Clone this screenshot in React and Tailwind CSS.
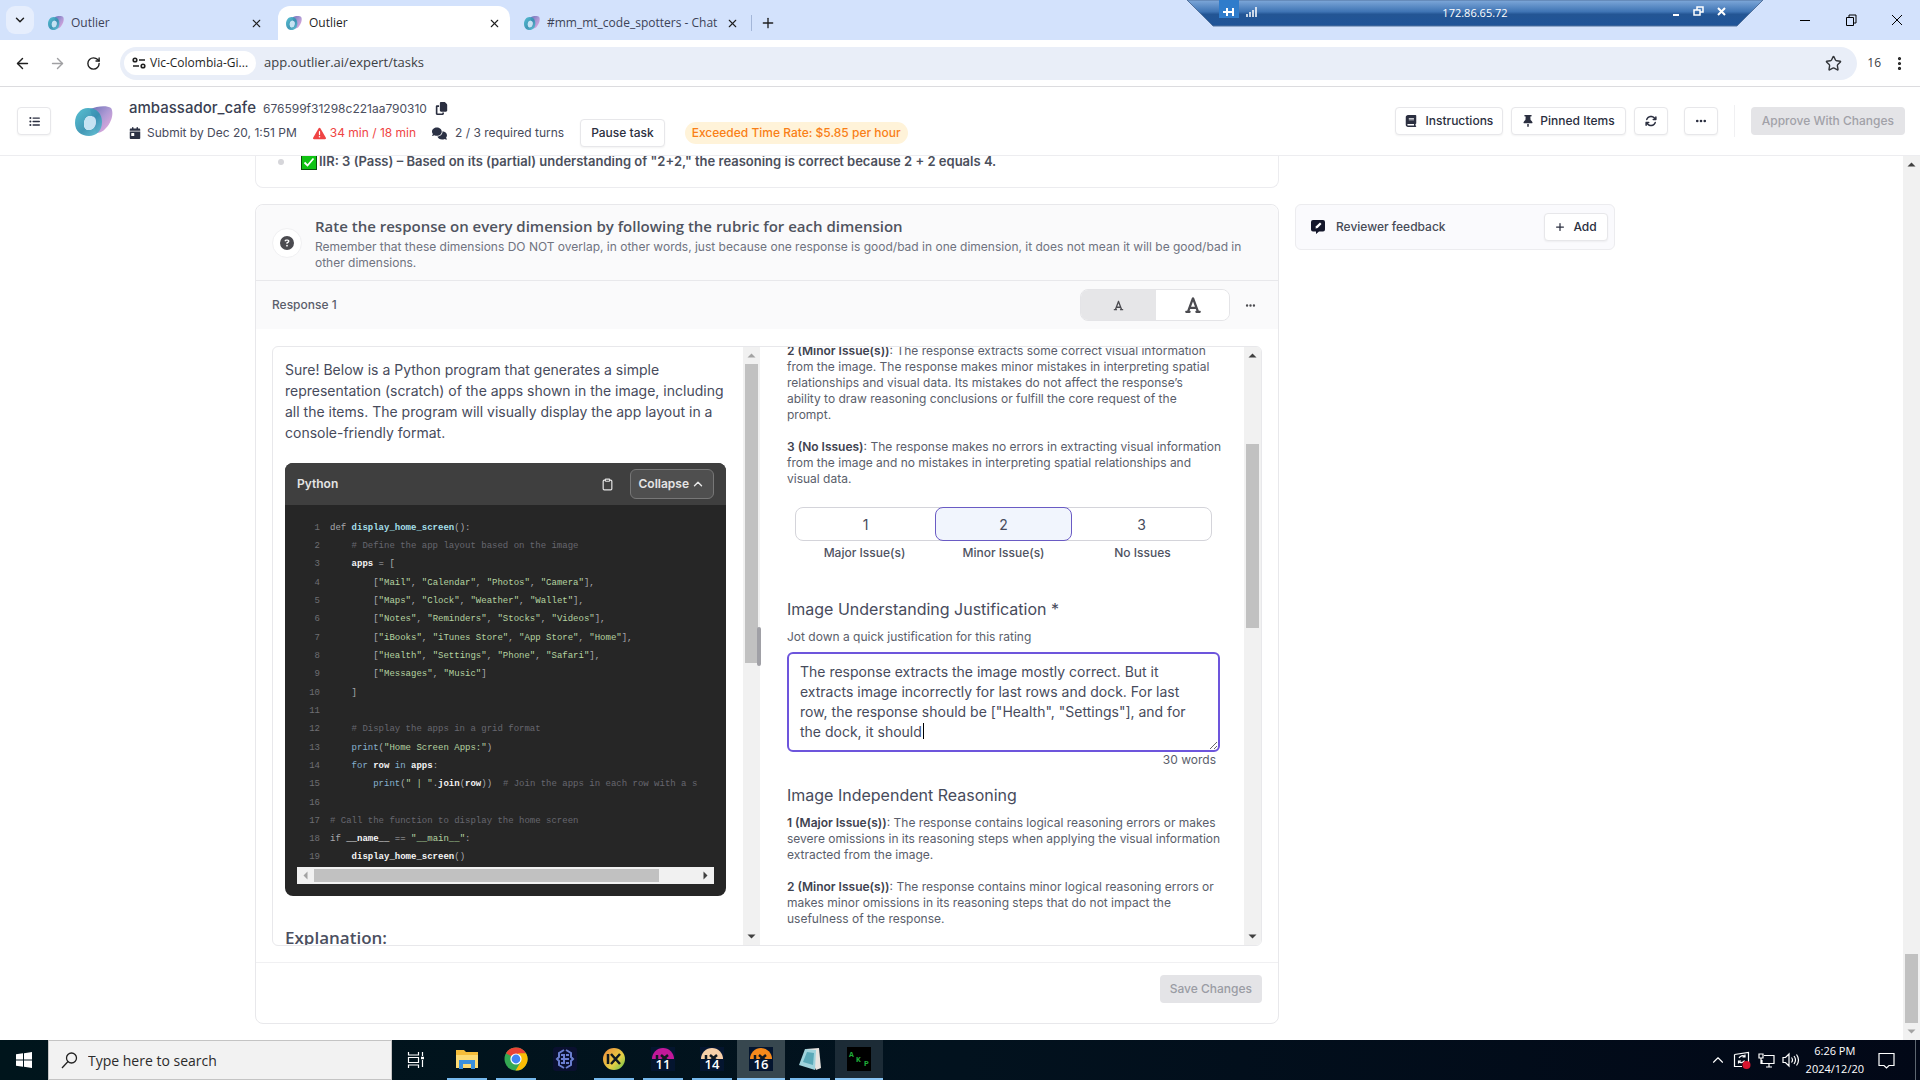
import React from "react";
import {
  FaListUl, FaCopy, FaCalendarDay, FaTriangleExclamation, FaComments, FaBook, FaThumbtack,
  FaArrowsRotate, FaEllipsis, FaCircleQuestion, FaFont, FaPlus,
} from "react-icons/fa6";
import {
  ArrowLeft, ArrowRight, RotateCw, X, Plus, ChevronDown, ChevronUp, Star, Clipboard, EllipsisVertical,
} from "lucide-react";

const SEGOE = "font-['Open_Sans',sans-serif]";

function OutlierLogo({ className, id }) {
  return (
    <svg viewBox="0 0 38 30" className={className} preserveAspectRatio="none" aria-hidden="true">
      <defs>
        <linearGradient id={`${id}a`} x1="0" y1="0" x2="1" y2="1">
          <stop offset="0" stopColor="#49bccf" />
          <stop offset="0.55" stopColor="#3390b0" />
          <stop offset="1" stopColor="#5fc3d6" />
        </linearGradient>
        <linearGradient id={`${id}b`} x1="0" y1="0" x2="1" y2="1">
          <stop offset="0" stopColor="#5a5fae" />
          <stop offset="0.5" stopColor="#a58fd0" />
          <stop offset="1" stopColor="#f0a5dc" />
        </linearGradient>
      </defs>
      <path d="M15 3 C22 0 32 -1 36 2 C39 6 37 16 31 22 C28 26 24 27 21 27 Z" fill={`url(#${id}b)`} opacity="0.9" />
      <path fillRule="evenodd" d="M13 2 C22 2 27 8 27 16 C27 25 21 30 14 30 C6 30 0 25 0 17 C0 8 6 2 13 2 Z M15 10 C11 10 9 14 9 18 C9 22 11 24 14 24 C18 24 21 20 21 16 C21 12 19 10 15 10 Z" fill={`url(#${id}a)`} opacity="0.92" />
      <path d="M15 10 C11 10 9 14 9 18 C9 22 11 24 14 24 C18 24 21 20 21 16 C21 12 19 10 15 10 Z" fill="#c5e3f3" />
    </svg>
  );
}

function Tab({ id, title, active, width }) {
  return (
    <div className={`flex h-full items-center ${width} ${active ? "rounded-t-xl bg-white" : ""}`}>
      <OutlierLogo id={id} className="ml-2 h-3.5 w-4 shrink-0" />
      <span className={`ml-[7px] flex-1 whitespace-nowrap text-[12px] ${active ? "text-[#1f1f1f]" : "text-[#3c4257]"}`}>{title}</span>
      <button aria-label={`Close ${title}`} className="mr-2 flex size-4 items-center justify-center text-[#1f1f1f]"><X size={13} strokeWidth={2} /></button>
    </div>
  );
}

function RemoteBar() {
  return (
    <div className="absolute left-[1187px] top-0 h-[27px] w-[576px]">
      <svg viewBox="0 0 576 27" className="absolute inset-0 size-full" aria-hidden="true">
        <defs>
          <linearGradient id="rdp" x1="0" y1="0" x2="0" y2="1">
            <stop offset="0" stopColor="#7fa9da" />
            <stop offset="0.45" stopColor="#3f74b4" />
            <stop offset="0.55" stopColor="#235594" />
            <stop offset="1" stopColor="#1f5498" />
          </linearGradient>
        </defs>
        <path d="M0 0 H576 L550 26 H26 Z" fill="url(#rdp)" stroke="#51719c" />
        <rect x="32" y="0" width="20" height="18" fill="#2f7ccb" />
        <path d="M36 12h4M40 8v8M40 12h6M46 8v8" stroke="#fff" strokeWidth="2" fill="none" />
        <path d="M60 14v3M63 12v5M66 10v7M69 7v10" stroke="#fff" strokeWidth="1.500" />
        <path d="M486 15h6" stroke="#fff" strokeWidth="2" />
        <path d="M507 10h6v5h-6zM510 10V7h6v5h-3" stroke="#fff" strokeWidth="1.500" fill="none" />
        <path d="M531 8l7 7M538 8l-7 7" stroke="#fff" strokeWidth="2" />
      </svg>
      <div className="relative pt-1 text-center text-[11px] leading-[17px] text-white">172.86.65.72</div>
    </div>
  );
}

function BrowserChrome() {
  return (
    <div className={SEGOE}>
      <div className="relative flex h-10 items-start bg-[#d3e2fc]">
        <button aria-label="Search tabs" className="ml-1.5 mt-1.5 flex size-7 items-center justify-center rounded-[9px] bg-[#e6eefd] text-[#1f1f1f]"><ChevronDown size={14} strokeWidth={2.500} /></button>
        <div className="ml-1.5 flex h-[34px] grow items-center self-end">
          <Tab id="t1" title="Outlier" width="w-[232px]" />
          <div className="w-1.5" />
          <Tab id="t2" title="Outlier" active width="w-[232px]" />
          <div className="w-1.5" />
          <Tab id="t3" title="#mm_mt_code_spotters - Chat" width="w-[232px]" />
          <div className="ml-[3px] h-4 w-px bg-[#a3b6d8]" />
          <button aria-label="New tab" className="ml-1.5 flex size-5 items-center justify-center text-[#1f1f1f]"><Plus size={16} /></button>
        </div>
        <div className="flex h-10 items-center gap-[30px] pr-[15px]">
          <button aria-label="Minimize"><svg width="16" height="16"><path d="M3 8.500h10" stroke="#000" /></svg></button>
          <button aria-label="Restore"><svg width="16" height="16"><path d="M3.500 5.500h7v8h-7zM6 5.500v-2.500h7v8h-2.500" stroke="#000" fill="none" /></svg></button>
          <button aria-label="Close"><svg width="16" height="16"><path d="M3 3l10 10M13 3l-10 10" stroke="#000" /></svg></button>
        </div>
        <RemoteBar />
      </div>
      <div className="flex h-[47px] items-center border-b border-[#dcdcdf] bg-white pl-3.5 pr-3">
        <button aria-label="Back" className="text-[#1f1f1f]"><ArrowLeft size={17} /></button>
        <button aria-label="Forward" className="ml-[18px] text-[#a0a0a3]"><ArrowRight size={17} /></button>
        <button aria-label="Reload" className="ml-5 text-[#1f1f1f]"><RotateCw size={15} strokeWidth={2.200} /></button>
        <div className="ml-[19px] flex h-[33px] flex-1 items-center rounded-full bg-[#e9eef8] pl-1 pr-[15px]">
          <button className="flex h-6 items-center gap-1 rounded-full bg-white px-2 text-[12px] text-[#1f1f1f]">
            <svg width="14" height="12" viewBox="0 0 14 12" fill="none" stroke="#1f1f1f" strokeWidth="1.600" aria-hidden="true"><circle cx="3" cy="3" r="1.800" /><path d="M7 3h6M1 9h6" /><circle cx="11" cy="9" r="1.800" /></svg>
            Vic-Colombia-Gi...
          </button>
          <input aria-label="Address" readOnly value="app.outlier.ai/expert/tasks" className="ml-2 min-w-0 flex-1 bg-transparent text-[13px] text-[#3c4043] outline-none" />
          <button aria-label="Bookmark" className="text-[#33363b]"><Star size={17} /></button>
        </div>
        <span className="ml-2.5 text-[12px] text-[#3c4043]">16</span>
        <button aria-label="Menu" className="ml-2.5 text-[#1f1f1f]"><EllipsisVertical size={17} strokeWidth={2.500} /></button>
      </div>
    </div>
  );
}

const outlineButton = "flex h-7 items-center justify-center rounded-[4px] border border-[#e7e7ea] bg-white text-[12px] font-medium text-[#2b2f40] shadow-xs";

function TaskHeader() {
  return (
    <header className="flex h-[69px] shrink-0 items-center border-b border-[#ededf0] pl-[17px] pr-[15px]">
      <button aria-label="Task list" className={`${outlineButton} w-[34px]`}><FaListUl size={11} /></button>
      <OutlierLogo id="hd" className="ml-6 h-[30px] w-[38px]" />
      <div className="ml-4">
        <div className="mt-1 flex h-5 items-center">
          <h1 className="text-[15px] font-medium text-[#3a3f52]">ambassador_cafe</h1>
          <span className="ml-[7px] text-[12px] text-[#4b4f60]">676599f31298c221aa790310</span>
          <button aria-label="Copy id" className="ml-2 text-[#2b2f40]"><FaCopy size={13} /></button>
        </div>
        <div className="flex h-[29px] items-center text-[12px] text-[#474b5c]">
          <FaCalendarDay size={12} className="text-[#2b3144]" />
          <span className="ml-1.5">Submit by Dec 20, 1:51 PM</span>
          <span className="ml-4 flex items-center gap-1 text-[#ef4444]"><FaTriangleExclamation size={13} />34 min / 18 min</span>
          <FaComments size={15} className="ml-4 text-[#2b3144]" />
          <span className="ml-2">2 / 3 required turns</span>
          <button className={`${outlineButton} ml-4 px-2.5`}>Pause task</button>
          <span className="ml-5 rounded-full bg-[#fff3d9] px-[7px] py-0.5 font-medium text-[#f97f16]">Exceeded Time Rate: $5.85 per hour</span>
        </div>
      </div>
      <div className="ml-auto flex items-center">
        <button className={`${outlineButton} gap-2 px-[9px]`}><FaBook size={12} />Instructions</button>
        <button className={`${outlineButton} ml-2 gap-1.5 px-2.5`}><FaThumbtack size={12} />Pinned Items</button>
        <button aria-label="Refresh" className={`${outlineButton} ml-2 w-[34px]`}><FaArrowsRotate size={12} /></button>
        <button aria-label="More" className={`${outlineButton} ml-4 w-[34px]`}><FaEllipsis size={12} /></button>
        <div className="ml-4 h-8 w-px bg-[#f0f0f2]" />
        <button disabled className="ml-4 h-7 rounded-[4px] bg-[#e4e4e7] px-[11px] text-[12px] font-medium text-[#a1a1a8]">Approve With Changes</button>
      </div>
    </header>
  );
}

function Arrow({ dir, dim }) {
  const d = { up: "M4.500 10.500h8l-4-4z", down: "M4.500 6.500h8l-4 4z", left: "M10.500 4.500v8l-4-4z", right: "M6.500 4.500v8l4-4z" }[dir];
  return <svg width="17" height="17" className="shrink-0" aria-hidden="true"><path d={d} fill={dim ? "#a3a3a3" : "#404040"} /></svg>;
}

function VScroll({ before, thumb, dimUp, dimDown }) {
  return (
    <div className="flex w-[17px] shrink-0 flex-col items-center bg-[#f1f1f1]">
      <Arrow dir="up" dim={dimUp} />
      <div className="flex min-h-0 w-[13px] flex-1 flex-col">
        <div className="shrink-0" style={{ height: before }} />
        <div className="shrink-0 bg-[#c1c1c1]" style={{ height: thumb }} />
      </div>
      <Arrow dir="down" dim={dimDown} />
    </div>
  );
}

const S = { p: "text-[#a9a9ad]", c: "text-[#66666f]", s: "text-[#b5d3a0]", b: "text-[#f4f4f4] font-bold", f: "text-[#a4dfe8] font-bold", k: "text-[#86b1cf]" };

function strings(items, tail) {
  const out = [["p", "        ["]];
  items.forEach((t, i) => {
    out.push(["s", `"${t}"`]);
    out.push(["p", i < items.length - 1 ? ", " : tail]);
  });
  return out;
}

const CODE = [
  [["p", "def "], ["f", "display_home_screen"], ["p", "():"]],
  [["c", "    # Define the app layout based on the image"]],
  [["b", "    apps"], ["p", " = ["]],
  strings(["Mail", "Calendar", "Photos", "Camera"], "],"),
  strings(["Maps", "Clock", "Weather", "Wallet"], "],"),
  strings(["Notes", "Reminders", "Stocks", "Videos"], "],"),
  strings(["iBooks", "iTunes Store", "App Store", "Home"], "],"),
  strings(["Health", "Settings", "Phone", "Safari"], "],"),
  strings(["Messages", "Music"], "]"),
  [["p", "    ]"]],
  [],
  [["c", "    # Display the apps in a grid format"]],
  [["k", "    print"], ["p", "("], ["s", "\"Home Screen Apps:\""], ["p", ")"]],
  [["k", "    for "], ["b", "row"], ["k", " in "], ["b", "apps"], ["p", ":"]],
  [["k", "        print"], ["p", "("], ["s", "\" | \""], ["p", "."], ["b", "join"], ["p", "("], ["b", "row"], ["p", "))  "], ["c", "# Join the apps in each row with a s"]],
  [],
  [["c", "# Call the function to display the home screen"]],
  [["p", "if "], ["b", "__name__"], ["p", " == "], ["s", "\"__main__\""], ["p", ":"]],
  [["b", "    display_home_screen"], ["p", "()"]],
];

function CodeBlock() {
  return (
    <div className="mt-5 overflow-hidden rounded-lg bg-[#262626]">
      <div className="flex h-[42px] items-center bg-[#3f3f3f] px-3 font-semibold text-[#e4e4e4]">
        <span className="text-[12px]">Python</span>
        <button aria-label="Copy code" className="ml-auto"><Clipboard size={13} strokeWidth={2.200} /></button>
        <button className="ml-4 flex h-[30px] items-center gap-0.5 rounded-md border border-[#777] bg-[#4f4f4f] px-2 text-[12px]">Collapse<ChevronUp size={14} strokeWidth={2.500} /></button>
      </div>
      <div className="px-3 pb-3 pt-3.5">
        <pre className="overflow-hidden font-['Liberation_Mono',monospace] text-[9px]">
          {CODE.map((line, i) => (
            <div key={i} className={`flex items-center ${i % 3 === 0 && i < 18 ? "h-[19px]" : "h-[18px]"}`}>
              <span className="w-[23px] shrink-0 text-right text-[#6f6f73]">{i + 1}</span>
              <span className="ml-2.5 shrink-0">{line.map(([k, t], j) => <span key={j} className={S[k]}>{t}</span>)}</span>
            </div>
          ))}
        </pre>
        <div className="flex h-[17px] items-center bg-[#f1f1f1]">
          <Arrow dir="left" dim />
          <div className="flex flex-1"><div className="h-[13px] w-[90%] bg-[#c1c1c1]" /></div>
          <Arrow dir="right" />
        </div>
      </div>
    </div>
  );
}

function Rubric({ label, children, className }) {
  return <p className={`-mr-3 text-[12px] leading-4 text-[#5a5e6b] ${className}`}><strong className="font-semibold text-[#3f4350]">{label}</strong>: {children}</p>;
}

function RatingScale() {
  const options = [["1", "Major Issue(s)"], ["2", "Minor Issue(s)"], ["3", "No Issues"]];
  return (
    <div className="mt-5 px-2">
      <div className="grid grid-cols-[1fr_137px_1fr] rounded-lg border border-[#d4d4da]">
        {options.map(([n]) => (
          <button key={n} aria-pressed={n === "2"} className={`h-8 text-[14px] text-[#474b5c] ${n === "2" ? "-my-px h-[34px] rounded-lg border border-[#6a5bc4] bg-[#f1f5fd]" : ""}`}>{n}</button>
        ))}
      </div>
      <div className="grid grid-cols-3 pt-1 text-center text-[12px] font-medium leading-4 text-[#4f5362]">
        {options.map(([n, l]) => <span key={n}>{l}</span>)}
      </div>
    </div>
  );
}

function RightPane() {
  return (
    <div className="min-w-0 flex-1 overflow-hidden pl-[27px] pr-6">
      <Rubric className="-mt-1" label="2 (Minor Issue(s))">The response extracts some correct visual information from the image. The response makes minor mistakes in interpreting spatial relationships and visual data. Its mistakes do not affect the response’s<br />ability to draw reasoning conclusions or fulfill the core request of the<br />prompt.</Rubric>
      <Rubric className="mt-4" label="3 (No Issues)">The response makes no errors in extracting visual information from the image and no mistakes in interpreting spatial relationships and<br />visual data.</Rubric>
      <RatingScale />
      <label htmlFor="justification" className="mt-9 block text-[16px] leading-6 text-[#474b5c]">Image Understanding Justification *</label>
      <p className="mt-2 text-[12px] leading-4 text-[#5a5e6b]">Jot down a quick justification for this rating</p>
      <div className="relative mt-[7px]">
        <textarea
          id="justification"
          rows={4}
          defaultValue={'The response extracts the image mostly correct. But it extracts image incorrectly for last rows and dock. For last row, the response should be ["Health", "Settings"], and for the dock, it should'}
          className="block h-[100px] w-full resize overflow-hidden rounded-md border-2 border-[#6d55dc] px-[11px] py-2 text-[14px] leading-5 text-[#474b5c] outline-none"
        />
        <span className="absolute left-[136px] top-[71px] h-4 w-px bg-black" />
      </div>
      <p className="pr-1 text-right text-[12px] leading-4 text-[#5a5e6b]">30 words</p>
      <h3 className="mt-[15px] text-[16px] leading-6 text-[#474b5c]">Image Independent Reasoning</h3>
      <Rubric className="mt-2" label="1 (Major Issue(s))">The response contains logical reasoning errors or makes severe omissions in its reasoning steps when applying the visual information extracted from the image.</Rubric>
      <Rubric className="mt-4" label="2 (Minor Issue(s))">The response contains minor logical reasoning errors or makes minor omissions in its reasoning steps that do not impact the usefulness of the response.</Rubric>
    </div>
  );
}

function MainColumn() {
  return (
    <main className="min-w-0 flex-1">
      <section className="h-8 rounded-b-lg border border-t-0 border-[#ececef] bg-white pl-[22px]">
        <div className="flex h-3 items-center text-[13px] font-semibold text-[#4b4f5c]">
          <span className="size-1.5 rounded-full bg-[#d6d6da]" />
          <svg width="16" height="16" viewBox="0 0 16 16" className="ml-[17px] mr-0.5" aria-hidden="true"><rect x="0.500" y="0.500" width="15" height="15" fill="#0fc312" stroke="#0b4d0c" /><path d="M3.500 8.500l3 3 6-7" stroke="#fff" strokeWidth="1.800" fill="none" /></svg>
          IIR: 3 (Pass) – Based on its (partial) understanding of "2+2," the reasoning is correct because 2 + 2 equals 4.
        </div>
      </section>
      <section className="mt-4 rounded-lg border border-[#e8e8eb] bg-white">
        <div className="flex items-center rounded-t-lg border-b border-[#e8e8eb] bg-[#fafafb] pb-[9px] pl-4 pr-6 pt-[9px]">
          <span className="flex size-[30px] shrink-0 items-center justify-center rounded-full border border-[#f0f0f2] bg-white text-[#4b4b50]"><FaCircleQuestion size={14} /></span>
          <div className="ml-[13px]">
            <h2 className={`mb-px text-[15px] font-semibold leading-6 text-[#50545f] ${SEGOE}`}>Rate the response on every dimension by following the rubric for each dimension</h2>
            <p className="text-[12px] leading-4 text-[#6f7380]">Remember that these dimensions DO NOT overlap, in other words, just because one response is good/bad in one dimension, it does not mean it will be good/bad in other dimensions.</p>
          </div>
        </div>
        <div className="flex h-12 items-center bg-[#fafafb] pl-4 pr-[22px]">
          <span className="text-[12px] font-medium text-[#5a5e6b]">Response 1</span>
          <div className="ml-auto flex h-8 overflow-hidden rounded-lg border border-[#e4e4e7] text-[#4b4b50]">
            <button aria-label="Small text" className="flex w-[75px] items-center justify-center bg-[#e6e6e8]"><FaFont size={11} /></button>
            <button aria-label="Large text" className="flex w-[73px] items-center justify-center bg-white"><FaFont size={18} /></button>
          </div>
          <button aria-label="Response options" className="ml-[15px] text-[#4b4b50]"><FaEllipsis size={11} /></button>
        </div>
        <div className="px-4 pb-4 pt-[17px]">
          <div className="flex h-[600px] overflow-hidden rounded-md border border-[#e8e8eb]">
            <div className="min-w-0 w-[470px] overflow-hidden pl-3 pr-[17px] pt-3">
              <p className="-mr-2 text-[14px] leading-[21px] text-[#474b5c]">Sure! Below is a Python program that generates a simple representation (scratch) of the apps shown in the image, including all the items. The program will visually display the app layout in a console-friendly format.</p>
              <CodeBlock />
              <h3 className={`mt-[30px] text-[17px] font-semibold leading-6 text-[#4b4f60] ${SEGOE}`}>Explanation:</h3>
            </div>
            <VScroll before={0} thumb={299} dimUp />
            <div className="relative w-0"><div className="absolute -left-[3px] top-[280px] h-[39px] w-1 rounded-sm bg-[#a0a0a6]" /></div>
            <RightPane />
            <VScroll before={80} thumb={184} />
          </div>
        </div>
        <div className="flex justify-end border-t border-[#f0f0f2] px-4 pb-5 pt-3">
          <button disabled className="h-7 rounded-[4px] bg-[#e4e4e7] px-2.5 text-[12px] font-medium text-[#9a9ca4]">Save Changes</button>
        </div>
      </section>
    </main>
  );
}

function Aside() {
  return (
    <aside className="mt-12 flex h-[46px] w-[320px] shrink-0 items-center rounded-md border border-[#ececef] bg-[#fafafd] pl-[15px] pr-1.5">
      <svg width="14" height="14" viewBox="0 0 14 14" aria-hidden="true"><path d="M2 0h10a2 2 0 0 1 2 2v7.500a2 2 0 0 1-2 2H8L5 14v-2.500H2a2 2 0 0 1-2-2V2a2 2 0 0 1 2-2z" fill="#14172b" /><path d="M4.500 8.500l.5-2.200L9 2.500l1.500 1.500L6.700 8z" fill="#fff" /></svg>
      <h2 className="ml-[11px] text-[12px] font-medium text-[#474b57]">Reviewer feedback</h2>
      <button className={`${outlineButton} ml-auto w-16 gap-2`}><FaPlus size={10} />Add</button>
    </aside>
  );
}

function TaskApp({ label, bg, children, wide }) {
  return (
    <button aria-label={label} className={`flex h-10 items-center justify-center border-b-2 ${wide ? "w-12" : "w-10"} ${bg}`}>{children}</button>
  );
}

function IxIcon({ color, num, id }) {
  return (
    <svg width="24" height="24" viewBox="0 0 24 24" aria-hidden="true">
      <defs>
        <linearGradient id={id} x1="0" y1="0" x2="1" y2="1">
          <stop offset="0" stopColor={num ? color : "#ee8a3a"} />
          <stop offset="0.6" stopColor={color} />
          <stop offset="1" stopColor={num ? color : "#5fc24a"} />
        </linearGradient>
      </defs>
      {num && <rect width="24" height="24" fill="#04152f" />}
      <circle cx="12" cy="12" r="11" fill={`url(#${id})`} />
      <path d={num ? "M6 8v5M10 8l7 6M17 8l-7 6" : "M6 7v10M9 7l9 10M18 7l-9 10"} stroke="#101820" strokeWidth="2.500" fill="none" />
      {num && <rect y="12" width="24" height="12" fill="#04152f" />}
      {num && <text x="12" y="22" fontSize="13" fontWeight="600" textAnchor="middle" fill="#fff" fontFamily="Open Sans, sans-serif">{num}</text>}
    </svg>
  );
}

function Taskbar() {
  return (
    <footer className={`flex h-10 shrink-0 items-center bg-linear-to-r from-[#00151c] via-[#02121e] to-[#020817] text-white ${SEGOE}`}>
      <button aria-label="Start" className="flex h-full w-12 items-center justify-center">
        <svg width="16" height="16" viewBox="0 0 16 16" fill="#fff"><path d="M0 2.300L7 1.300V7.500H0zM8 1.200L16 0V7.500H8zM0 8.500h7v6.200L0 13.700zM8 8.500h8V16l-8-1.200z" /></svg>
      </button>
      <label className="flex h-full w-[344px] items-center border border-[#c4c4c4] bg-[#f2f2f2] pl-3">
        <svg width="17" height="17" viewBox="0 0 17 17" fill="none" stroke="#222" strokeWidth="1.300" aria-hidden="true"><circle cx="10.500" cy="6" r="5" /><path d="M7 9.500L1 16" /></svg>
        <input aria-label="Search" placeholder="Type here to search" className="ml-2.5 min-w-0 flex-1 bg-transparent text-[14px] outline-none placeholder:text-[#2b2b2b]" />
      </label>
      <button aria-label="Task view" className="flex h-full w-12 items-center justify-center">
        <svg width="18" height="18" viewBox="0 0 18 18" fill="none" stroke="#fff" strokeWidth="1.200"><path d="M1.500 1v3h10V1M1.500 17v-3h10v3M1.500 6.500h10v5h-10zM15.500 1v4M15.500 9v7" /><path d="M14 7h3" strokeWidth="2.500" /></svg>
      </button>
      <div className="flex items-center">
        <div className="ml-[7px]"><TaskApp label="File Explorer" bg="border-[#76b9ed]">
          <svg width="24" height="22" viewBox="0 0 24 22"><path d="M1 2h8l2 2h12v16H1z" fill="#f5bd3a" /><path d="M1 7h22v13H1z" fill="#fddb73" /><path d="M4 12h16v9h-4v-5H8v5H4z" fill="#3a8fdc" /></svg>
        </TaskApp></div>
        <div className="ml-[9px]"><TaskApp label="Chrome" bg="border-[#76b9ed]">
          <svg width="24" height="24" viewBox="0 0 24 24"><circle cx="12" cy="12" r="11.500" fill="#34a853" /><path d="M12 12L2 6.200A11.500 11.500 0 0 1 22 6.200L17 7z" fill="#ea4335" /><path d="M22 6.200A11.500 11.500 0 0 1 11.500 23.500L17 14.500 14 6.200z" fill="#fbbc05" /><circle cx="12" cy="12" r="5.600" fill="#fff" /><circle cx="12" cy="12" r="4.400" fill="#4285f4" /></svg>
        </TaskApp></div>
        <div className="ml-[9px]"><TaskApp label="Editor" bg="border-transparent">
          <svg width="24" height="24" viewBox="0 0 24 24"><rect width="24" height="24" rx="3" fill="#0a1030" /><path d="M11 3L6 6v4l-2 2 2 2v4l5 3M13 3l5 3v4l2 2-2 2v4l-5 3M8 12h8M8 8h3v8H8M16 8h-3M16 16h-3" fill="none" stroke="#6b7fd0" strokeWidth="2" /></svg>
        </TaskApp></div>
        <div className="ml-[9px]"><TaskApp label="IX" bg="border-[#76b9ed]"><IxIcon id="ix0" color="#e6cf45" /></TaskApp></div>
        <div className="ml-[9px]"><TaskApp label="IX 11" bg="border-[#76b9ed]"><IxIcon id="ix1" color="#c2189a" num="11" /></TaskApp></div>
        <div className="ml-[9px]"><TaskApp label="IX 14" bg="border-[#76b9ed]"><IxIcon id="ix2" color="#f7cfa8" num="14" /></TaskApp></div>
        <div className="ml-[5px]"><TaskApp wide label="IX 16" bg="border-[#8ac6f5] bg-[#37474f]"><IxIcon id="ix3" color="#f58a1c" num="16" /></TaskApp></div>
        <div className="ml-[5px]"><TaskApp label="Notepad" bg="border-[#76b9ed]">
          <svg width="24" height="24" viewBox="0 0 24 24"><path d="M8 2l13-1 2 20-5 2z" fill="#e8e4e0" /><path d="M7 2l11 1-1 20L1 18z" fill="#9fd3dc" /><path d="M9 5l7 1-1 12-10-3z" fill="#5aa9b8" /></svg>
        </TaskApp></div>
        <div className="ml-[5px]"><TaskApp wide label="AKP" bg="border-[#8ac6f5] bg-[#1c2b36]">
          <svg width="24" height="24" viewBox="0 0 24 24" fontFamily="Liberation Mono, monospace" fontWeight="700" fontSize="8" fill="#1fae3a"><rect width="24" height="24" fill="#000" /><text x="2" y="10">A</text><text x="9" y="15">K</text><text x="17" y="19">P</text></svg>
        </TaskApp></div>
      </div>
      <div className="ml-auto flex h-full items-center">
        <ChevronUp size={18} strokeWidth={1.500} />
        <svg width="18" height="18" viewBox="0 0 18 18" fill="none" stroke="#fff" strokeWidth="1.200" className="ml-1.5" aria-hidden="true"><path d="M1.500 3.500l14-2v11M1.500 3.500v12H9M12 5.500a4 4 0 0 0-6 1.500M12 3.500v2.500H9.500M6 11a4 4 0 0 0 5.500-1.500M5.500 12.500V10H8" /><circle cx="13.500" cy="14" r="4" fill="#d6152f" stroke="none" /></svg>
        <svg width="17" height="16" viewBox="0 0 17 16" fill="none" stroke="#fff" strokeWidth="1.200" className="ml-[7px]" aria-hidden="true"><path d="M6 3.500h10v8H4V8M8 15h6M11 11.500V15M1 2h4v4H1zM3 6v6" /></svg>
        <svg width="18" height="16" viewBox="0 0 18 16" fill="none" stroke="#fff" strokeWidth="1.200" className="ml-[7px]" aria-hidden="true"><path d="M1 5.500h2.500L7 2v12l-3.500-3.500H1zM9.500 5.500q2 2.500 0 5M12 4q3 4 0 8M14.500 2.500q4 5.500 0 11" /></svg>
        <div className="ml-1.5 text-center text-[11px] leading-[18px]"><div>6:26 PM</div><div>2024/12/20</div></div>
        <svg width="17" height="17" viewBox="0 0 17 17" fill="none" stroke="#fff" strokeWidth="1.200" className="ml-3.5" aria-hidden="true"><path d="M1 1.500h15v12h-5L8.500 16 6 13.500H1z" /></svg>
        <div className="ml-5 mr-1 h-full w-px bg-[#5d6670]" />
      </div>
    </footer>
  );
}

export default function App() {
  return (
    <div className="flex h-screen flex-col overflow-hidden bg-white font-['Inter',sans-serif]">
      <BrowserChrome />
      <TaskHeader />
      <div className="flex min-h-0 flex-1">
        <div className="flex min-w-0 flex-1 items-start gap-4 overflow-hidden pl-[255px] pr-[288px]">
          <MainColumn />
          <Aside />
        </div>
        <VScroll before={781} thumb={69} dimDown />
      </div>
      <Taskbar />
    </div>
  );
}
